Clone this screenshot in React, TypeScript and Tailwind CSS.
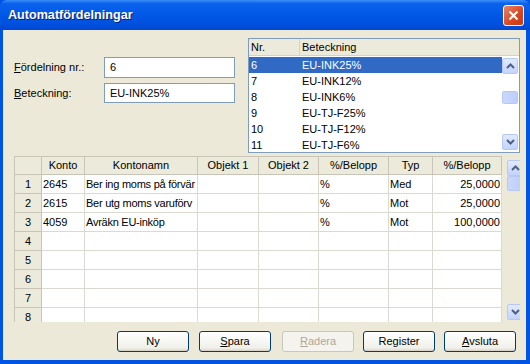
import React from "react";

const font = "font-['Liberation_Sans',Arial,sans-serif]";

const listRows = [
  { nr: "6", name: "EU-INK25%" },
  { nr: "7", name: "EU-INK12%" },
  { nr: "8", name: "EU-INK6%" },
  { nr: "9", name: "EU-TJ-F25%" },
  { nr: "10", name: "EU-TJ-F12%" },
  { nr: "11", name: "EU-TJ-F6%" },
];

const cols = [
  { label: "", w: "w-[27px]" },
  { label: "Konto", w: "w-[43px]" },
  { label: "Kontonamn", w: "w-[113px]" },
  { label: "Objekt 1", w: "w-[61px]" },
  { label: "Objekt 2", w: "w-[60px]" },
  { label: "%/Belopp", w: "w-[70px]" },
  { label: "Typ", w: "w-[44px]" },
  { label: "%/Belopp", w: "w-[69px]" },
];

const gridRows = [
  ["2645", "Ber ing moms på förvär", "", "", "%", "Med", "25,0000"],
  ["2615", "Ber utg moms varuförv", "", "", "%", "Mot", "25,0000"],
  ["4059", "Avräkn EU-inköp", "", "", "%", "Mot", "100,0000"],
  ["", "", "", "", "", "", ""],
  ["", "", "", "", "", "", ""],
  ["", "", "", "", "", "", ""],
  ["", "", "", "", "", "", ""],
  ["", "", "", "", "", "", ""],
];

function Arrow({ up }: { up?: boolean }) {
  return (
    <div className="w-[16px] h-[16px] rounded-[2px] border border-[#b7c8f6] bg-[linear-gradient(to_bottom,#e1eafe,#c3d3fd)] flex items-center justify-center">
      <svg width="9" height="6" viewBox="0 0 9 6">
        <path
          d={up ? "M1 5 L4.5 1.5 L8 5" : "M1 1 L4.5 4.5 L8 1"}
          fill="none"
          stroke="#4d6185"
          strokeWidth="2"
        />
      </svg>
    </div>
  );
}

function Thumb({ h }: { h: string }) {
  return (
    <div
      className={`w-[16px] ${h} rounded-[2px] border border-[#b7c8f6] bg-[linear-gradient(to_right,#c9d8fc,#bccefb)]`}
    />
  );
}

function Btn({
  children,
  disabled,
  className = "",
}: {
  children: React.ReactNode;
  disabled?: boolean;
  className?: string;
}) {
  return (
    <button
      className={`w-[72px] h-[21px] rounded-[3px] border text-[11px] leading-none flex items-center justify-center ${
        disabled
          ? "border-[#c9c7ba] text-[#aca899] bg-[#f4f3ee]"
          : "border-[#003c74] text-black bg-[linear-gradient(to_bottom,#ffffff,#f0f0ea_85%,#d6d0c5)]"
      } ${className}`}
    >
      {children}
    </button>
  );
}

export default function App() {
  return (
    <div className={`w-[530px] h-[364px] bg-[#0054e3] flex flex-col ${font} text-[11px] text-black`}>
      {/* title bar */}
      <div className="h-[30px] flex items-center pl-[8px] pr-[6px] rounded-t-[7px] bg-[linear-gradient(to_bottom,#3c8ef9_0%,#0a62ec_12%,#0058e6_50%,#004fdc_85%,#0046d0_100%)]">
        <span className="text-white font-bold text-[12.6px] [text-shadow:1px_1px_0_#0a1e6e]">
          Automatfördelningar
        </span>
        <div className="ml-auto w-[21px] h-[21px] rounded-[3px] border border-white bg-[linear-gradient(135deg,#e8856a,#d8461e_60%,#c23a12)] flex items-center justify-center">
          <svg width="11" height="11" viewBox="0 0 11 11">
            <path d="M1.5 1.5 L9.5 9.5 M9.5 1.5 L1.5 9.5" stroke="white" strokeWidth="2.2" />
          </svg>
        </div>
      </div>

      {/* client */}
      <div className="mx-[3px] mr-[4px] h-[330px] bg-[#ece9d8] flex flex-col pt-[8px] pl-[11px] pr-[6px]">
        {/* top section */}
        <div className="flex h-[115px]">
          <div className="w-[221px] pt-[19px] flex flex-col gap-[5px]">
            <div className="flex items-center">
              <span className="w-[90px]">
                <u>F</u>ördelning nr.:
              </span>
              <div className="w-[131px] h-[21px] border border-[#7f9db9] bg-white flex items-center pl-[5px]">
                6
              </div>
            </div>
            <div className="flex items-center">
              <span className="w-[90px]">
                <u>B</u>eteckning:
              </span>
              <div className="w-[131px] h-[20px] border border-[#7f9db9] bg-white flex items-center pl-[5px]">
                EU-INK25%
              </div>
            </div>
          </div>

          <div className="ml-auto w-[272px] h-[115px] border border-[#7f9db9] bg-white flex flex-col">
            <div className="h-[17px] flex bg-[#ebeadb] border-b border-[#d6d2c2] shrink-0">
              <div className="w-[51px] pl-[2px] border-r border-[#d6d2c2] flex items-center">Nr.</div>
              <div className="pl-[2px] flex items-center">Beteckning</div>
            </div>
            <div className="flex flex-1">
              <div className="flex-1 flex flex-col pt-[1px]">
                {listRows.map((r, i) => (
                  <div
                    key={r.nr}
                    className={`h-[16px] flex items-center ${
                      i === 0 ? "bg-[#316ac5] text-white" : ""
                    }`}
                  >
                    <span className="w-[51px] pl-[2px]">{r.nr}</span>
                    <span className="pl-[2px]">{r.name}</span>
                  </div>
                ))}
              </div>
              <div className="w-[17px] flex flex-col pt-[2px] pb-[3px] pr-[1px]">
                <Arrow up />
                <div className="flex-1 pt-[17px]">
                  <Thumb h="h-[13px]" />
                </div>
                <Arrow />
              </div>
            </div>
          </div>
        </div>

        {/* grid */}
        <div className="mt-[3px] h-[166px] flex overflow-hidden">
          <div className="flex flex-col border-l border-t border-[#c8c5b8] bg-white">
            <div className="flex h-[18px] shrink-0 bg-[#ebeadb]">
              {cols.map((c, i) => (
                <div
                  key={i}
                  className={`${c.w} border-r border-b border-[#c8c5b8] flex items-center justify-center`}
                >
                  {c.label}
                </div>
              ))}
            </div>
            {gridRows.map((row, ri) => (
              <div key={ri} className="flex h-[19px] shrink-0">
                <div className="w-[27px] bg-[#ebeadb] border-r border-b border-[#c8c5b8] flex items-center justify-center">
                  {ri + 1}
                </div>
                {row.map((cell, ci) => (
                  <div
                    key={ci}
                    className={`${cols[ci + 1].w} border-r border-b border-[#dcdad0] flex items-center whitespace-nowrap overflow-hidden ${
                      ci === 6 ? "justify-end pr-[1px]" : ci === 1 ? "pl-[1px] tracking-[-0.25px]" : "pl-[1px]"
                    }`}
                  >
                    {cell}
                  </div>
                ))}
              </div>
            ))}
          </div>
          <div className="ml-[5px] w-[16px] flex flex-col pt-[4px] pb-[2px]">
            <Arrow up />
            <Thumb h="h-[15px]" />
            <div className="flex-1" />
            <Arrow />
          </div>
        </div>

        {/* buttons */}
        <div className="mt-[9px] flex pl-[103px]">
          <Btn>Ny</Btn>
          <Btn className="ml-[10px]">
            <u>S</u>para
          </Btn>
          <Btn disabled className="ml-[11px]">
            <u>R</u>adera
          </Btn>
          <Btn className="ml-[9px]">
            Re<u>g</u>ister
          </Btn>
          <Btn className="ml-[9px]">
            <u>A</u>vsluta
          </Btn>
        </div>
      </div>
    </div>
  );
}
